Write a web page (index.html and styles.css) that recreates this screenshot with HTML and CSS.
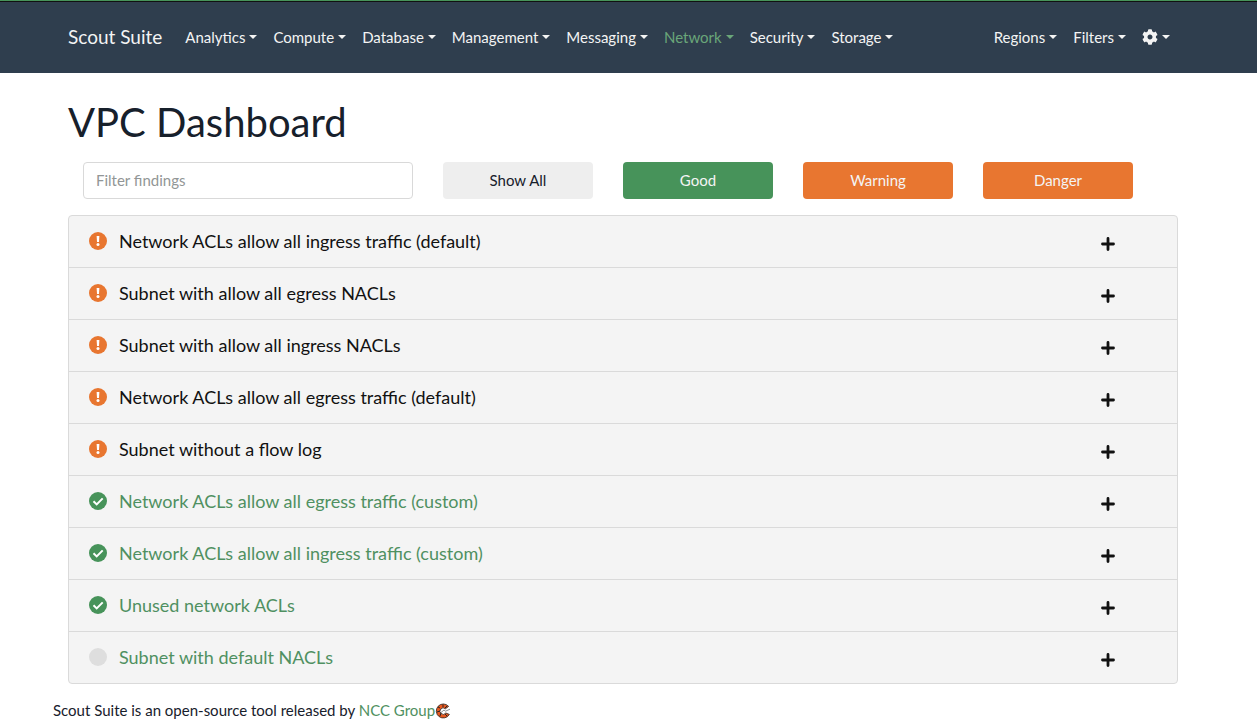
FILE: index.html
```html
<!DOCTYPE html>
<html lang="en">
<head>
<meta charset="utf-8">
<title>Scout Suite</title>
<link rel="stylesheet" href="styles.css">
</head>
<body>
<svg class="sprite" aria-hidden="true">
  <symbol id="warn" viewBox="0 0 18 18"><circle cx="9" cy="9" r="9" fill="#e87630"/><path d="M7.6 4h2.8l-.4 6H8z" fill="#fff"/><circle cx="9" cy="12.6" r="1.5" fill="#fff"/></symbol>
  <symbol id="good" viewBox="0 0 18 18"><circle cx="9" cy="9" r="9" fill="#47935a"/><path d="M4.5 9.2l3.2 3.2 6-6" fill="none" stroke="#fff" stroke-width="2"/></symbol>
  <symbol id="none" viewBox="0 0 18 18"><circle cx="9" cy="9" r="9" fill="#dedede"/></symbol>
  <symbol id="plus" viewBox="0 0 14 14"><path d="M7 1.5v11M1.5 7h11" fill="none" stroke="#111" stroke-width="2.8" stroke-linecap="round"/></symbol>
</svg>
<header class="topbar">
  <nav class="container nav">
    <a class="brand" href="#">Scout Suite</a>
    <a class="nav-link" href="#">Analytics</a>
    <a class="nav-link" href="#">Compute</a>
    <a class="nav-link" href="#">Database</a>
    <a class="nav-link" href="#">Management</a>
    <a class="nav-link" href="#">Messaging</a>
    <a class="nav-link active" href="#">Network</a>
    <a class="nav-link" href="#">Security</a>
    <a class="nav-link" href="#">Storage</a>
    <div class="nav-end">
      <a class="nav-link" href="#">Regions</a>
      <a class="nav-link" href="#">Filters</a>
      <a class="nav-link" href="#" aria-label="Settings"><svg class="cog" viewBox="0 0 512 512"><path fill="currentColor" d="M487.4 315.7l-42.6-24.6c4.3-23.2 4.3-47 0-70.2l42.6-24.6c4.9-2.8 7.1-8.6 5.5-14-11.1-35.6-30-67.8-54.7-94.6-3.8-4.1-10-5.1-14.8-2.3L380.8 110c-17.9-15.4-38.5-27.3-60.8-35.1V25.8c0-5.6-3.9-10.5-9.4-11.7-36.7-8.2-74.3-7.8-109.2 0-5.5 1.2-9.4 6.1-9.4 11.7V75c-22.2 7.9-42.8 19.8-60.8 35.1L88.7 85.5c-4.9-2.8-11-1.9-14.8 2.3-24.7 26.7-43.6 58.9-54.7 94.6-1.7 5.4.6 11.2 5.5 14L67.3 221c-4.3 23.2-4.3 47 0 70.2l-42.6 24.6c-4.9 2.8-7.1 8.6-5.5 14 11.1 35.6 30 67.8 54.7 94.6 3.8 4.1 10 5.1 14.8 2.3l42.6-24.6c17.9 15.4 38.5 27.3 60.8 35.1v49.2c0 5.6 3.9 10.5 9.4 11.7 36.7 8.2 74.3 7.8 109.2 0 5.5-1.2 9.4-6.1 9.4-11.7v-49.2c22.2-7.9 42.8-19.8 60.8-35.1l42.6 24.6c4.9 2.8 11 1.9 14.8-2.3 24.7-26.7 43.6-58.9 54.7-94.6 1.5-5.5-.7-11.3-5.6-14.1zM256 336c-44.1 0-80-35.9-80-80s35.9-80 80-80 80 35.9 80 80-35.9 80-80 80z"/></svg></a>
    </div>
  </nav>
</header>
<main class="container">
  <h1 class="title">VPC Dashboard</h1>
  <div class="filters">
    <input class="search" type="text" placeholder="Filter findings" aria-label="Filter findings">
    <button class="btn all" type="button">Show All</button>
    <button class="btn good" type="button">Good</button>
    <button class="btn alert" type="button">Warning</button>
    <button class="btn alert" type="button">Danger</button>
  </div>
  <ul class="findings">
    <li class="finding"><svg class="status"><use href="#warn"/></svg><a class="name" href="#">Network ACLs allow all ingress traffic (default)</a><button class="expand" type="button" aria-label="Expand"><svg class="plus"><use href="#plus"/></svg></button></li>
    <li class="finding"><svg class="status"><use href="#warn"/></svg><a class="name" href="#">Subnet with allow all egress NACLs</a><button class="expand" type="button" aria-label="Expand"><svg class="plus"><use href="#plus"/></svg></button></li>
    <li class="finding"><svg class="status"><use href="#warn"/></svg><a class="name" href="#">Subnet with allow all ingress NACLs</a><button class="expand" type="button" aria-label="Expand"><svg class="plus"><use href="#plus"/></svg></button></li>
    <li class="finding"><svg class="status"><use href="#warn"/></svg><a class="name" href="#">Network ACLs allow all egress traffic (default)</a><button class="expand" type="button" aria-label="Expand"><svg class="plus"><use href="#plus"/></svg></button></li>
    <li class="finding"><svg class="status"><use href="#warn"/></svg><a class="name" href="#">Subnet without a flow log</a><button class="expand" type="button" aria-label="Expand"><svg class="plus"><use href="#plus"/></svg></button></li>
    <li class="finding"><svg class="status"><use href="#good"/></svg><a class="name passed" href="#">Network ACLs allow all egress traffic (custom)</a><button class="expand" type="button" aria-label="Expand"><svg class="plus"><use href="#plus"/></svg></button></li>
    <li class="finding"><svg class="status"><use href="#good"/></svg><a class="name passed" href="#">Network ACLs allow all ingress traffic (custom)</a><button class="expand" type="button" aria-label="Expand"><svg class="plus"><use href="#plus"/></svg></button></li>
    <li class="finding"><svg class="status"><use href="#good"/></svg><a class="name passed" href="#">Unused network ACLs</a><button class="expand" type="button" aria-label="Expand"><svg class="plus"><use href="#plus"/></svg></button></li>
    <li class="finding"><svg class="status"><use href="#none"/></svg><a class="name passed" href="#">Subnet with default NACLs</a><button class="expand" type="button" aria-label="Expand"><svg class="plus"><use href="#plus"/></svg></button></li>
  </ul>
</main>
<footer class="container footer">
  <span>Scout Suite is an open-source tool released by <a class="ncc" href="#">NCC Group</a></span>
  <svg class="logo" viewBox="0 0 16 16"><path d="M13.6 3.4A7 7 0 1 0 14.4 11.4L10.8 10A3.2 3.2 0 1 1 10.4 5.8z" fill="#e8591f" stroke="#2b2320" stroke-width=".8"/><path d="M3 4l2 1M2 9l3-1M5 13l1-3M8 1.5v2.5M12 3l-2 2M12 13l-2-2" stroke="#2b2320" stroke-width="1"/><path d="M6 9.5l3-2.5 1.5 1.2 4.5-2" fill="none" stroke="#8b8f91" stroke-width="1"/></svg>
</footer>
</body>
</html>
```
FILE: styles.css
```css
* { box-sizing: border-box; }
body {
  margin: 0;
  background: #fff;
  color: #17202b;
  font: 15px/22px Lato, "Liberation Sans", sans-serif;
}
a { color: inherit; text-decoration: none; }
button, input { font: inherit; }
.sprite { display: none; }

.topbar {
  padding: 16px 11px 16px 0;
  background: #2f3e4e;
  border-top: 1px solid #47935a;
  box-shadow: inset 0 1px #111;
  color: #f4f4f4;
}
.container {
  max-width: 1140px;
  margin: 0 auto;
  padding: 0 15px;
}
.nav { display: flex; align-items: center; height: 40px; }
.brand { margin-right: 15px; font-size: 19px; line-height: 28px; }
.nav-link { display: flex; align-items: center; padding: 8px; }
.nav-link::after {
  content: "";
  margin-left: 4px;
  border: 4px solid transparent;
  border-top-color: currentColor;
  border-bottom: 0;
}
.active { color: #6aa679; }
.nav-end { display: flex; margin-left: auto; }
.cog { width: 16px; height: 16px; }

body > .container { width: calc(100% - 11px); margin-left: max(0px, calc((100% - 1151px) / 2)); }
.title {
  margin: 0;
  padding-top: 25px;
  font-size: 40px;
  line-height: 48px;
  font-weight: 400;
}
.filters {
  display: grid;
  grid-template-columns: 11fr 5fr 5fr 5fr 5fr;
  gap: 30px;
  padding: 16px 45px 16px 15px;
}
.search {
  width: 100%;
  min-width: 0;
  height: 37px;
  padding: 0 12px 2px;
  border: 1px solid #d9d9d9;
  border-radius: 4px;
  background: #fff;
  color: #17202b;
}
.search::placeholder { color: #929696; opacity: 1; }
.btn { height: 37px; padding: 0 0 2px; border: 0; border-radius: 4px; color: #f4f4f4; }
.all { background: #eee; color: #17202b; }
.good { background: #47935a; }
.alert { background: #e87630; }

.findings {
  margin: 0;
  padding: 0;
  list-style: none;
  border: 1px solid #dadada;
  border-radius: 4px;
  background: #f4f4f4;
}
.finding {
  display: flex;
  align-items: center;
  height: 52px;
  padding: 0 60px 2px 20px;
  border-bottom: 1px solid #dadada;
}
.finding:last-child { height: 51px; border-bottom: 0; }
.status { width: 18px; height: 18px; margin-right: 12px; }
.name { flex: 1; color: #111; font-size: 18px; line-height: 24px; }
.passed { color: #4f9061; }
.expand { display: flex; padding: 6px 2px 0; border: 0; background: none; }
.plus { width: 14px; height: 14px; }

.footer { display: flex; align-items: center; padding: 15px 0 0; }
.ncc { color: #4f9061; }
.logo { width: 16px; height: 16px; margin-top: 2px; }
```
